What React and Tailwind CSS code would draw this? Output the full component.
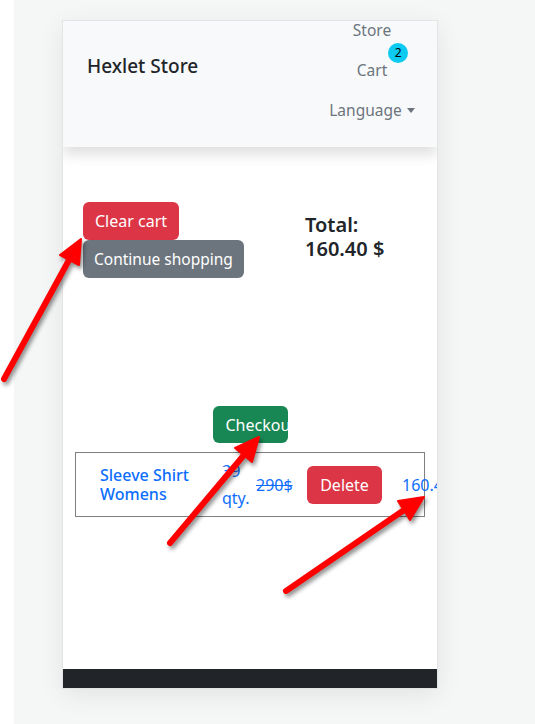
import React from "react";

const font = { fontFamily: '"Noto Sans", "Open Sans", sans-serif' };

function Arrows() {
  // red annotation arrows drawn over the screenshot
  const arrows = [
    { line: "4,379 69,260", head: "81,239 79,265 60,255" },
    { line: "170,543 244,455", head: "259,437 252,462 235,448" },
    { line: "286,591 404,510", head: "424,497 410,520 398,501" },
  ];
  return (
    <svg
      className="absolute inset-0 pointer-events-none drop-shadow-[2px_3px_2px_rgba(0,0,0,0.45)]"
      width="535"
      height="724"
      viewBox="0 0 535 724"
    >
      {arrows.map((a, i) => (
        <g key={i} fill="#ff0000" stroke="#ff0000">
          <polyline points={a.line} strokeWidth="6" strokeLinecap="round" fill="none" />
          <polygon points={a.head} strokeWidth="2" strokeLinejoin="round" />
        </g>
      ))}
    </svg>
  );
}

function Navbar() {
  return (
    <nav className="h-[126px] bg-[#f8f9fa] flex justify-between shadow-[0_8px_12px_rgba(0,0,0,0.12)] relative z-10">
      <div className="pl-[24px] pt-[30px] text-[19px] leading-[30px] font-medium text-[#212529]">
        Hexlet Store
      </div>
      <ul className="w-[120px] mr-[5px] -mt-[11px] flex flex-col items-center text-[15.5px] text-[#6c757d]">
        <li className="py-2 leading-6">Store</li>
        <li className="py-2 leading-6">
          <span className="relative">
            Cart
            <span className="absolute -right-[21px] -top-[16px] w-[20px] h-[20px] rounded-full bg-[#0dcaf0] text-black text-[12px] leading-[20px] text-center">
              2
            </span>
          </span>
        </li>
        <li className="py-2 leading-6 flex items-center">
          Language
          <span className="ml-[5px] w-0 h-0 border-t-[5px] border-t-[#6c757d] border-x-[4px] border-x-transparent"></span>
        </li>
      </ul>
    </nav>
  );
}

function CartRow() {
  return (
    <div className="mx-[12px] border border-[#808080] h-[65px] flex items-center text-[16px] text-[#0d6efd]">
      <div className="pl-[24px] w-[146px] shrink-0 font-medium leading-[19px]">Sleeve Shirt Womens</div>
      <div className="w-[34px] shrink-0 leading-[27px]">39 qty.</div>
      <div className="w-[51px] shrink-0 line-through">290$</div>
      <button className="shrink-0 w-[75px] h-[38px] rounded-[6px] bg-[#dc3545] text-white">Delete</button>
      <div className="ml-[20px] shrink-0 whitespace-nowrap">160.40$</div>
    </div>
  );
}

export default function App() {
  return (
    <div className="relative w-[535px] h-[724px] bg-white flex overflow-hidden" style={font}>
      <div className="w-[14px] bg-white"></div>
      <div className="flex-1 bg-[#f5f6f6] pl-[48px] pt-[20px]">
        <div className="w-[376px] h-[669px] border border-[#e2e4e6] bg-white flex flex-col overflow-hidden shadow-[0_6px_24px_rgba(0,0,0,0.08)]">
          <Navbar />
          <main className="flex-1">
            <div className="flex pt-[55px]">
              <div className="pl-[20px] w-[242px] flex flex-col items-start">
                <button className="px-3 py-[7px] leading-6 rounded-[6px] bg-[#dc3545] text-white text-[16px]">
                  Clear cart
                </button>
                <button className="px-[11px] py-[7px] leading-6 rounded-[6px] bg-[#6c757d] text-white text-[15.5px]">
                  Continue shopping
                </button>
              </div>
              <div className="pt-[11px] text-[20px] leading-6 font-semibold text-[#212529]">
                <div>Total:</div>
                <div>160.40 $</div>
              </div>
            </div>
            <div className="mt-[128px] flex justify-center">
              <button className="w-[75px] h-[37px] rounded-[6px] bg-[#198754] text-white text-[16px] text-left pl-[13px] overflow-hidden whitespace-nowrap">
                Checkout
              </button>
            </div>
            <div className="mt-[9px]">
              <CartRow />
            </div>
          </main>
          <footer className="h-[19px] bg-[#212529]"></footer>
        </div>
      </div>
      <Arrows />
    </div>
  );
}
